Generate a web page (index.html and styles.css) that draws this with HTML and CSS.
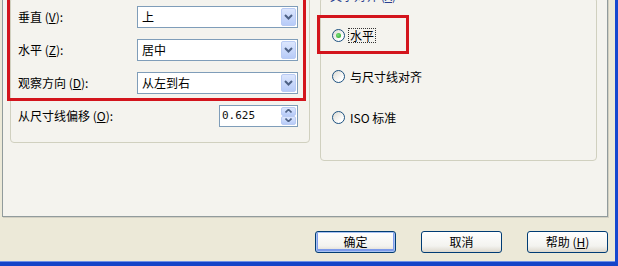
FILE: index.html
```html
<!DOCTYPE html>
<html lang="zh">
<head>
<meta charset="utf-8">
<link rel="stylesheet" href="styles.css">
</head>
<body>
<div class="frame">
  <div class="panel">
    <div class="group group-left">
      <div class="row">
        <span class="lbl">垂直 (<u>V</u>):</span>
        <div class="combo"><span class="val">上</span><span class="dd"><svg width="9" height="6" viewBox="0 0 9 6"><path d="M1 1 L4.5 4.5 L8 1" fill="none" stroke="#4D6185" stroke-width="2"/></svg></span></div>
      </div>
      <div class="row">
        <span class="lbl">水平 (<u>Z</u>):</span>
        <div class="combo"><span class="val">居中</span><span class="dd"><svg width="9" height="6" viewBox="0 0 9 6"><path d="M1 1 L4.5 4.5 L8 1" fill="none" stroke="#4D6185" stroke-width="2"/></svg></span></div>
      </div>
      <div class="row">
        <span class="lbl">观察方向 (<u>D</u>):</span>
        <div class="combo"><span class="val">从左到右</span><span class="dd"><svg width="9" height="6" viewBox="0 0 9 6"><path d="M1 1 L4.5 4.5 L8 1" fill="none" stroke="#4D6185" stroke-width="2"/></svg></span></div>
      </div>
      <div class="row">
        <span class="lbl">从尺寸线偏移 (<u>O</u>):</span>
        <div class="spin">
          <span class="num">0.625</span>
          <span class="spin-btns">
            <span class="sb"><svg width="7" height="4" viewBox="0 0 7 4"><path d="M0.5 3.5 L3.5 0.5 L6.5 3.5" fill="none" stroke="#4D6185" stroke-width="1.6"/></svg></span>
            <span class="sb"><svg width="7" height="4" viewBox="0 0 7 4"><path d="M0.5 0.5 L3.5 3.5 L6.5 0.5" fill="none" stroke="#4D6185" stroke-width="1.6"/></svg></span>
          </span>
        </div>
      </div>
    </div>
    <div class="group group-right">
      <span class="legend">文字对齐 (<u>A</u>)</span>
      <div class="radio-row"><span class="radio checked"></span><span class="rlabel focus">水平</span></div>
      <div class="radio-row"><span class="radio"></span><span class="rlabel">与尺寸线对齐</span></div>
      <div class="radio-row"><span class="radio"></span><span class="rlabel">ISO 标准</span></div>
    </div>
  </div>
  <div class="buttons">
    <button class="btn default">确定</button>
    <button class="btn">取消</button>
    <button class="btn">帮助 (<u>H</u>)</button>
  </div>
  <div class="redbox box-left"></div>
  <div class="redbox box-right"></div>
</div>
</body>
</html>
```
FILE: styles.css
```css
html, body {
  margin: 0;
  padding: 0;
}
body {
  width: 618px;
  height: 266px;
  overflow: hidden;
  font-family: "Noto Sans CJK SC", "Noto Sans", sans-serif;
  font-size: 12px;
  color: #000;
}
.frame {
  position: relative;
  width: 618px;
  height: 266px;
  box-sizing: border-box;
  background: #ECE9D8;
  border-right: 3px solid #1648CF;
  border-bottom: 4px solid #1444C8;
  box-shadow: inset 0 -1px 0 #6E8FE6;
  padding-left: 2px;
  overflow: hidden;
  display: flex;
  flex-direction: column;
}
.panel {
  margin-top: -12px;
  width: 606px;
  box-sizing: border-box;
  border: 1px solid #919B9C;
  background: #F4F3EE;
  padding: 8px 0 55px 7px;
  display: flex;
  align-items: flex-start;
  gap: 10px;
  box-shadow: 1px 1px 0 #D2CFC2;
}
.group {
  position: relative;
  box-sizing: border-box;
  border: 1px solid #D0D0BF;
  border-radius: 4px;
}
.group-left {
  width: 300px;
  padding: 2px 11px 10px 7px;
}
.row {
  height: 33px;
  display: flex;
  align-items: center;
  justify-content: space-between;
}
.lbl {
  line-height: 14px;
  white-space: nowrap;
}
.combo {
  width: 161px;
  height: 22px;
  box-sizing: border-box;
  border: 1px solid #7F9DB9;
  background: #fff;
  display: flex;
  align-items: center;
  justify-content: space-between;
  padding: 0 1px 0 4px;
}
.val {
  line-height: 14px;
}
.dd {
  width: 15px;
  height: 18px;
  box-sizing: border-box;
  border: 1px solid #B9CBF4;
  border-radius: 2px;
  background: linear-gradient(#DCE6FD, #B7CBF8);
  display: flex;
  align-items: center;
  justify-content: center;
}
.spin {
  width: 79px;
  height: 22px;
  box-sizing: border-box;
  border: 1px solid #7F9DB9;
  background: #fff;
  display: flex;
  align-items: center;
  justify-content: space-between;
  padding: 0 1px 0 2px;
}
.num {
  font-family: "DejaVu Sans Mono", "Liberation Mono", monospace;
  font-size: 11px;
  line-height: 13px;
  color: #111;
}
.spin-btns {
  display: flex;
  flex-direction: column;
  gap: 0;
}
.sb {
  width: 15px;
  height: 9px;
  box-sizing: border-box;
  border: 1px solid #B9CBF4;
  border-radius: 2px;
  background: linear-gradient(#DCE6FD, #B7CBF8);
  display: flex;
  align-items: center;
  justify-content: center;
}
.group-right {
  width: 277px;
  height: 164px;
  padding: 31px 0 0 11px;
  display: flex;
  flex-direction: column;
  gap: 28px;
}
.legend {
  position: absolute;
  top: -8px;
  left: 7px;
  padding: 0 2px;
  line-height: 12px;
  background: #F4F3EE;
  color: #2B3F8F;
}
.radio-row {
  height: 13px;
  display: flex;
  align-items: center;
}
.radio {
  position: relative;
  width: 13px;
  height: 13px;
  box-sizing: border-box;
  border: 1px solid #1C5180;
  border-radius: 50%;
  background: linear-gradient(135deg, #DCDAD2, #FFFFFF 75%);
}
.radio.checked::after {
  content: "";
  position: absolute;
  left: 3px;
  top: 3px;
  width: 5px;
  height: 5px;
  border-radius: 50%;
  background: radial-gradient(circle at 40% 40%, #7BE07B, #21A121);
}
.rlabel {
  margin-left: 3px;
  line-height: 13px;
  white-space: nowrap;
  border: 1px solid transparent;
  padding: 0 1px;
}
.rlabel.focus {
  border: 1px dotted #333;
}
.buttons {
  display: flex;
  justify-content: flex-end;
  gap: 25px;
  margin-top: 14px;
  padding-right: 7px;
}
.btn {
  width: 81px;
  height: 22px;
  box-sizing: border-box;
  margin: 0;
  border: 1px solid #003C74;
  border-radius: 3px;
  background: linear-gradient(#FFFFFF, #F3F3EF 70%, #DCD8CD);
  font-family: "Noto Sans CJK SC", "Noto Sans", sans-serif;
  font-size: 12px;
  line-height: 14px;
  color: #000;
  padding: 0;
  display: flex;
  align-items: center;
  justify-content: center;
}
.btn.default {
  box-shadow: inset 0 0 0 1px #A8C2F2, inset 0 -1px 0 2px #7D9BEA;
}
.redbox {
  position: absolute;
  box-sizing: border-box;
  border: 3px solid #D3141C;
}
.box-left {
  left: 7px;
  top: -6px;
  width: 299px;
  height: 107px;
}
.box-right {
  left: 317px;
  top: 15px;
  width: 92px;
  height: 39px;
}
```
